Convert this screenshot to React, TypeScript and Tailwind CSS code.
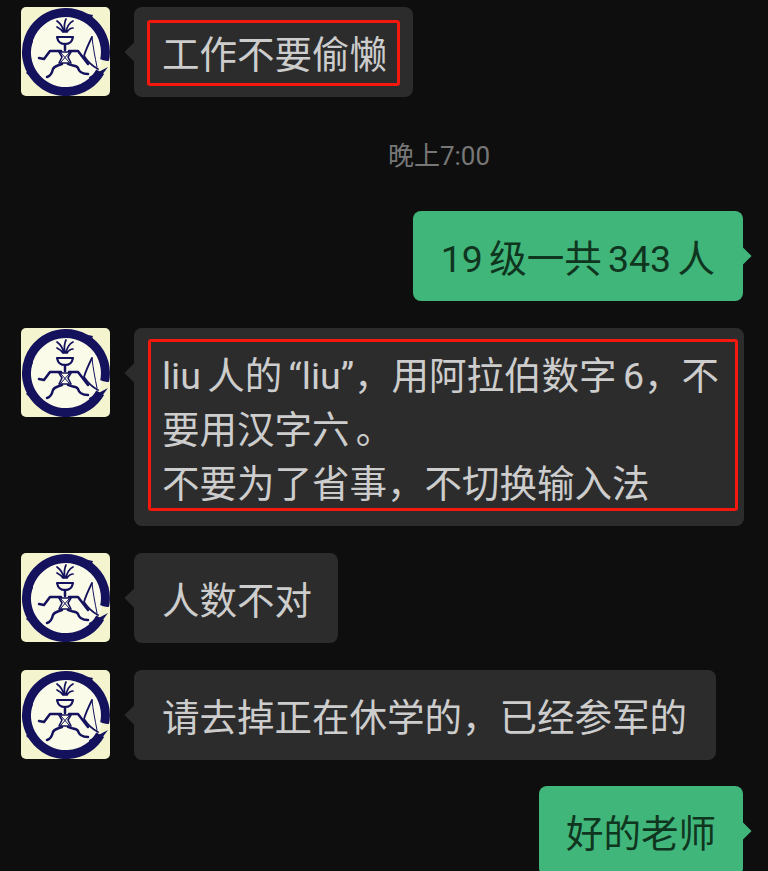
import type { ReactNode } from "react";

function Avatar() {
  return (
    <div className="w-[89px] h-[89px] shrink-0 rounded-[5px] overflow-hidden bg-[#f4f4cf]">
      <svg viewBox="0 0 89 89" className="w-full h-full blur-[0.4px]" fill="none">
        <circle cx="45" cy="45" r="37" fill="#fbfbea" />
        <path d="M79.2 64.75A39.5 39.5 0 1 1 83.6 53.2" stroke="#14125c" strokeWidth="9" />
        <path d="M7 32L4 40L9 44L12 34ZM10 60L5 66L14 74ZM62 6L72 8L70 13ZM80 44L88 42L87 54L81 53Z" fill="#14125c" />
        <path d="M68 70L87 60L78 72L70 76Z" fill="#14125c" />
        <g stroke="#14125c" strokeLinecap="round" strokeLinejoin="round">
          <path d="M43 25C42 20 40 17 36 14M44 25C43 20 43 16 45 12M45 25C46 20 48 16 52 14M42 25C40 22 38 21 36 20M46 25C48 22 50 21 52 21" strokeWidth="1.7" />
          <path d="M36 30H52C51 35 49 37 44 37C39 37 37 35 36 30Z" strokeWidth="2.2" fill="#fbfbea" />
          <path d="M44 37V43" strokeWidth="2.5" />
          <path d="M38 45H50L47 50L50 56H38L41 50Z" strokeWidth="1.6" fill="#fbfbea" />
          <path d="M40 46L48 55M48 46L40 55" strokeWidth="1" />
          <path d="M40 44H29L23 52L18 51" strokeWidth="2.5" />
          <path d="M48 44H57L67 57" strokeWidth="2.5" />
          <path d="M71 30C68 36 65 42 63 49C67 55 71 59 77 62" strokeWidth="1.8" />
          <path d="M71 30C72 40 74 50 76 60" strokeWidth="1" />
          <path d="M41 57C36 59 33 59 32 62C31 66 30 69 26 70" strokeWidth="2.5" />
          <path d="M47 57C51 59 56 58 57 61C58 65 62 67 67 67" strokeWidth="2.5" />
        </g>
      </svg>
    </div>
  );
}

function Frame({ className }: { className: string }) {
  return <div className={`absolute border-[3px] border-[#f5180f] rounded-[3px] ${className}`} />;
}

function Received({ children, frame, className = "" }: { children: ReactNode; frame?: string; className?: string }) {
  return (
    <div className="flex items-start pl-[21px]">
      <Avatar />
      <div className={`relative ml-[24px] bg-[#2c2c2c] rounded-[8px] pl-[28px] pr-[26px] pt-[21px] pb-[15px] text-[#cdcdcd] ${className}`}>
        <div className="absolute left-[-9px] top-[36px] w-[18px] h-[18px] rotate-45 bg-[#2c2c2c] scale-75" />
        <div className="relative">{children}</div>
        {frame && <Frame className={frame} />}
      </div>
    </div>
  );
}

function Sent({ children, className = "" }: { children: ReactNode; className?: string }) {
  return (
    <div className="flex justify-end pr-[25px]">
      <div className={`relative bg-[#41b67b] rounded-[8px] pl-[28px] pr-[28px] pt-[21px] pb-[15px] text-[#10351f] ${className}`}>
        <div className="absolute right-[-8px] top-[36px] w-[18px] h-[18px] rotate-45 bg-[#41b67b] scale-75" />
        <div className="relative">{children}</div>
      </div>
    </div>
  );
}

export default function App() {
  return (
    <div
      className="w-[768px] h-[871px] overflow-hidden bg-[#0e0e0e] pt-[7px] flex flex-col text-[37.5px] leading-[54px] [word-spacing:-3px]"
      style={{ fontFamily: 'Roboto, "Noto Sans CJK SC", sans-serif' }}
    >
      <Received frame="left-[13px] top-[13px] right-[13px] bottom-[11px]">工作不要偷懒</Received>

      <div className="mt-[44px] h-[30px] flex items-center justify-center pl-[110px] text-[26px] leading-[30px] text-[#777777]">
        晚上7:00
      </div>

      <div className="mt-[40px]">
        <Sent>19 级一共 343 人</Sent>
      </div>

      <div className="mt-[27px]">
        <Received frame="left-[14px] top-[11px] right-[6px] bottom-[15px]" className="w-[610px] !pr-[22px]">
          liu 人的 “liu”，用阿拉伯数字 6，不要用汉字六 。
          <br />
          不要为了省事，不切换输入法
        </Received>
      </div>

      <div className="mt-[27px]">
        <Received>人数不对</Received>
      </div>

      <div className="mt-[27px]">
        <Received className="!pr-[29px]">请去掉正在休学的，已经参军的</Received>
      </div>

      <div className="mt-[26px]">
        <Sent className="!pl-[27px] !pr-[27px]">好的老师</Sent>
      </div>
    </div>
  );
}
